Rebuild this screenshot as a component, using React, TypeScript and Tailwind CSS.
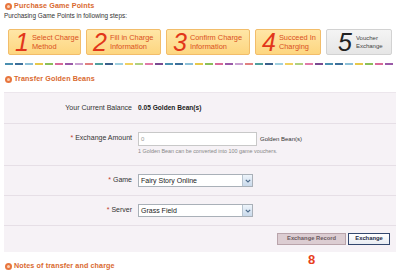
import React from "react";

const dashColors = ["#4a8fb0", "#3c6f9a", "#8cc0d8", "#e6c84a", "#8bbf5a", "#d86a9a", "#9a5aa8", "#c9a0d0", "#e08080", "#4f9e9e", "#3a5f8a", "#a0d0e0", "#f0d060", "#b0d080", "#e07aa8", "#7a4a90"];

function Heading({ text }: { text: string }) {
  return (
    <div className="h-[12px] flex items-center pl-[5px] gap-[2px]">
      <span className="w-[7px] h-[7px] rounded-full bg-[#e8763e] flex items-center justify-center">
        <span className="w-[3px] h-[3px] rounded-full bg-[#fbd2b8]" />
      </span>
      <span className="text-[7.2px] font-bold text-[#d9692f] leading-none tracking-[0.1px]">{text}</span>
    </div>
  );
}

function Step({ n, l1, l2, w, gray }: { n: string; l1: string; l2: string; w: string; gray?: boolean }) {
  return (
    <div
      className={
        "h-[26px] flex items-center rounded-[2px] border " +
        w +
        (gray
          ? " border-[#d2d2d2] bg-gradient-to-b from-[#f4f4f4] to-[#e6e6e6]"
          : " border-[#f2bd6a] bg-gradient-to-b from-[#ffe6a6] to-[#fdd680]")
      }
    >
      <span
        className={
          "italic leading-none font-['Liberation_Sans',Arial,sans-serif] " +
          (gray ? "text-[25px] text-[#222] ml-[11px] mr-[4px]" : "text-[25px] text-[#e2361a] ml-[6px] mr-[3px]")
        }
      >
        {n}
      </span>
      <span
        className={
          "flex flex-col " +
          (gray ? "text-[6px] leading-[8.5px] text-[#444]" : "text-[7.4px] leading-[9px] text-[#d9501e]")
        }
      >
        <span className="whitespace-nowrap">{l1}</span>
        <span className="whitespace-nowrap">{l2}</span>
      </span>
    </div>
  );
}

function SelectBox({ value }: { value: string }) {
  return (
    <div className="w-[115px] h-[13px] bg-white border border-[#a9b0b8] flex items-center justify-between">
      <span className="text-[7px] text-[#222] pl-[2px] leading-none">{value}</span>
      <span className="w-[10px] h-[11px] mr-[0px] border-l border-[#b8c4d0] bg-gradient-to-b from-[#eef4fb] to-[#c9d9ea] flex items-center justify-center">
        <svg width="6" height="4" viewBox="0 0 6 4">
          <path d="M0.8 0.8 L3 3 L5.2 0.8" stroke="#4d6b8c" strokeWidth="1.2" fill="none" />
        </svg>
      </span>
    </div>
  );
}

export default function App() {
  return (
    <div className="relative w-[400px] h-[275px] overflow-hidden bg-white font-['Liberation_Sans',Arial,sans-serif]">
      <Heading text="Purchase Game Points" />
      <div className="h-[9px] flex items-center pl-[4px] text-[6.4px] text-[#333] leading-none">
        Purchasing Game Points in following steps:
      </div>
      <div className="mt-[8px] flex pl-[8px] gap-[5px]">
        <Step n="1" l1="Select Charge" l2="Method" w="w-[73px]" />
        <Step n="2" l1="Fill in Charge" l2="Information" w="w-[75px]" />
        <Step n="3" l1="Confirm Charge" l2="Information" w="w-[84px]" />
        <Step n="4" l1="Succeed In" l2="Charging" w="w-[66px]" />
        <Step n="5" l1="Voucher" l2="Exchange" w="w-[66px]" gray />
      </div>
      <div className="mt-[8px] ml-[5px] h-[2px]">
        <svg width="390" height="2" viewBox="0 0 390 2" className="block">
          {Array.from({ length: 39 }).map((_, i) => (
            <rect key={i} x={i * 10} y={0} width={8} height={2} fill={dashColors[i % dashColors.length]} />
          ))}
        </svg>
      </div>
      <div className="mt-[8px]">
        <Heading text="Transfer Golden Beans" />
      </div>
      <div className="mt-[7px] mx-[4px] bg-[#f6f2f6] border-t border-[#ece6ec]">
        <div className="h-[31px] flex items-center border-b border-[#e6dfe6]">
          <div className="w-[128px] text-right text-[7px] text-[#333]">Your Current Balance</div>
          <div className="ml-[6px] text-[6.6px] font-bold text-[#222]">0.05 Golden Bean(s)</div>
        </div>
        <div className="h-[42px] flex border-b border-[#e6dfe6]">
          <div className="w-[128px] pt-[10px] text-right text-[7px] text-[#333] leading-none">
            <span className="text-[#c0392b]">* </span>Exchange Amount
          </div>
          <div className="ml-[6px] pt-[8px] flex flex-col">
            <div className="flex items-center">
              <div className="w-[119px] h-[14px] bg-white border border-[#c8c8c8] flex items-center pl-[2px] text-[6px] text-[#999]">0</div>
              <span className="ml-[3px] text-[6px] text-[#333]">Golden Bean(s)</span>
            </div>
            <div className="mt-[3px] text-[5.4px] text-[#888] leading-none">
              1 Golden Bean can be converted into 100 game vouchers.
            </div>
          </div>
        </div>
        <div className="h-[30px] flex items-center border-b border-[#e6dfe6]">
          <div className="w-[128px] text-right text-[7px] text-[#333]">
            <span className="text-[#c0392b]">* </span>Game
          </div>
          <div className="ml-[6px]">
            <SelectBox value="Fairy Story Online" />
          </div>
        </div>
        <div className="h-[30px] flex items-center border-b border-[#e6dfe6]">
          <div className="w-[128px] text-right text-[7px] text-[#333]">
            <span className="text-[#c0392b]">* </span>Server
          </div>
          <div className="ml-[6px]">
            <SelectBox value="Grass Field" />
          </div>
        </div>
        <div className="h-[26px] flex items-center justify-end pr-[6px] gap-[2px]">
          <button className="w-[69px] h-[12px] bg-[#dccdd2] border border-[#b9a4ab] text-[5.8px] font-bold text-[#6a5a60] leading-none">
            Exchange Record
          </button>
          <button className="w-[42px] h-[12px] bg-gradient-to-b from-white to-[#e8ecf2] border border-[#33476e] text-[5.8px] font-bold text-[#1e2a44] leading-none">
            Exchange
          </button>
        </div>
      </div>
      <div className="mt-[8px]">
        <Heading text="Notes of transfer and charge" />
      </div>
      <div className="absolute left-[308px] top-[253px] text-[13px] font-bold text-[#e8401c] leading-none">8</div>
    </div>
  );
}
